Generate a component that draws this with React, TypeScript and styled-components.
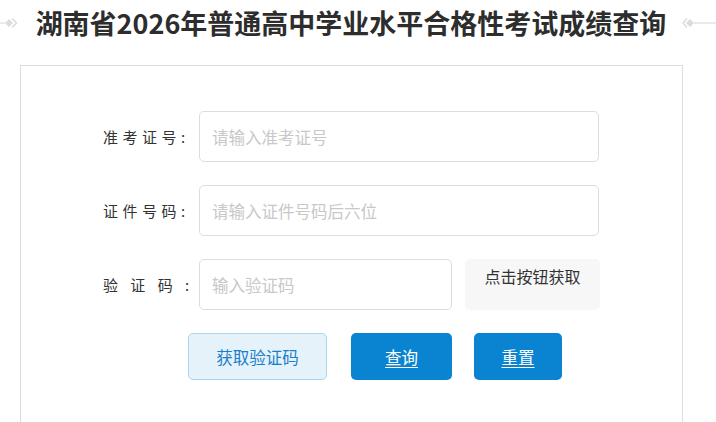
import React from "react";
import styled, { createGlobalStyle } from "styled-components";

const Global = createGlobalStyle`
  html, body { margin: 0; padding: 0; background: #fff; }
  body { font-family: "Noto Sans CJK SC", "Noto Sans", sans-serif; color: #333; overflow: hidden; }
  * { box-sizing: border-box; }
`;

const Page = styled.div`
  width: 716px;
  height: 422px;
  overflow: hidden;
`;

const Header = styled.div`
  display: flex;
  align-items: center;
  height: 45px;
  padding-top: 1px;
`;

const Deco = styled.svg<{ $w: number }>`
  width: ${(p) => p.$w}px;
  height: 12px;
  flex: none;
`;

const Title = styled.h1`
  margin: 0;
  flex: 1;
  text-align: center;
  font-size: 27px;
  font-weight: 700;
  color: #2d2d2d;
  white-space: nowrap;
  line-height: 40px;
  padding-right: 2px;
`;

const Card = styled.div`
  margin: 20px 0 0 20px;
  width: 663px;
  height: 400px;
  border: 1px solid #dddddd;
  border-bottom: none;
  padding: 45px 0 0 82px;
  display: flex;
  flex-direction: column;
  gap: 23px;
`;

const Row = styled.div`
  display: flex;
  align-items: center;
  height: 51px;
`;

const Label = styled.label`
  width: 96px;
  flex: none;
  font-size: 15px;
  letter-spacing: 4.5px;
  color: #333;
  white-space: pre;
`;

const Input = styled.input<{ $w: number }>`
  width: ${(p) => p.$w}px;
  height: 51px;
  border: 1px solid #dddddd;
  border-radius: 5px;
  padding: 0 12px;
  font-family: "Noto Sans CJK SC", sans-serif;
  font-size: 16.5px;
  color: #333;
  outline: none;
  &::placeholder { color: #c8c8c8; }
`;

const CodeBox = styled.div`
  margin-left: 13px;
  width: 135px;
  height: 51px;
  background: #f7f7f7;
  border-radius: 5px;
  font-size: 16px;
  color: #333;
  text-align: center;
  padding-top: 6px;
  line-height: 22px;
`;

const Actions = styled.div`
  display: flex;
  align-items: center;
  padding-left: 85px;
`;

const Btn = styled.a<{ $w: number; $ml: number; $variant: "light" | "primary" }>`
  display: flex;
  align-items: center;
  justify-content: center;
  width: ${(p) => p.$w}px;
  height: 47px;
  margin-left: ${(p) => p.$ml}px;
  border-radius: 5px;
  font-size: 16.5px;
  cursor: pointer;
  ${(p) =>
    p.$variant === "light"
      ? `background:#e6f2fa;border:1px solid #a8d5f1;color:#1a7fcb;text-decoration:none;`
      : `background:#0a84d0;border:none;color:#fff;text-decoration:underline;text-underline-offset:3px;`}
`;

const DecoLeft = () => (
  <Deco $w={22} viewBox="0 0 22 12">
    <line x1="0" y1="6" x2="5" y2="6" stroke="#dcdcdc" strokeWidth="1.2" />
    <path d="M5 6 L9 2 L13 6 L9 10 Z" fill="#dcdcdc" />
    <path d="M12 1.5 L16.5 6 L12 10.5" fill="none" stroke="#dcdcdc" strokeWidth="1.6" />
  </Deco>
);

const DecoRight = () => (
  <Deco $w={34} viewBox="0 0 34 12">
    <path d="M5 1.5 L1 6 L5 10.5" fill="none" stroke="#dcdcdc" strokeWidth="1.6" />
    <path d="M4 6 L8 2 L12 6 L8 10 Z" fill="#dcdcdc" />
    <line x1="12" y1="6" x2="34" y2="6" stroke="#dcdcdc" strokeWidth="1.2" />
  </Deco>
);

export default function App() {
  return (
    <Page>
      <Global />
      <Header>
        <DecoLeft />
        <Title>湖南省2026年普通高中学业水平合格性考试成绩查询</Title>
        <DecoRight />
      </Header>
      <Card>
        <Row>
          <Label>准考证号:</Label>
          <Input $w={400} placeholder="请输入准考证号" />
        </Row>
        <Row>
          <Label>证件号码:</Label>
          <Input $w={400} placeholder="请输入证件号码后六位" />
        </Row>
        <Row>
          <Label>验 证 码 :</Label>
          <Input $w={253} placeholder="输入验证码" />
          <CodeBox>点击按钮获取</CodeBox>
        </Row>
        <Actions>
          <Btn $w={139} $ml={0} $variant="light">获取验证码</Btn>
          <Btn $w={101} $ml={24} $variant="primary">查询</Btn>
          <Btn $w={88} $ml={22} $variant="primary">重置</Btn>
        </Actions>
      </Card>
    </Page>
  );
}
